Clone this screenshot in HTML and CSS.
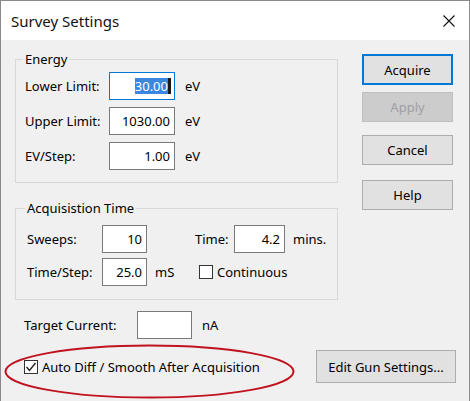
FILE: index.html
```html
<!DOCTYPE html>
<html>
<head>
<meta charset="utf-8">
<link rel="stylesheet" href="styles.css">
</head>
<body>
<div class="window">
  <div class="titlebar">
    <span class="title">Survey Settings</span>
    <svg class="close" width="12" height="12" viewBox="0 0 12 12"><path d="M0.5 0.5 L11.5 11.5 M11.5 0.5 L0.5 11.5" stroke="#111" stroke-width="1.1" fill="none"/></svg>
  </div>
  <div class="client">
    <div class="top">
      <div class="left">
        <fieldset class="group energy">
          <legend>Energy</legend>
          <div class="row">
            <span class="lbl">Lower Limit:</span>
            <div class="field wide focused"><span class="sel">30.00</span><span class="caret"></span></div>
            <span class="unit">eV</span>
          </div>
          <div class="row">
            <span class="lbl">Upper Limit:</span>
            <div class="field wide">1030.00</div>
            <span class="unit">eV</span>
          </div>
          <div class="row">
            <span class="lbl">EV/Step:</span>
            <div class="field wide">1.00</div>
            <span class="unit">eV</span>
          </div>
        </fieldset>
        <fieldset class="group acq">
          <legend>Acquisistion Time</legend>
          <div class="acq-grid">
            <span class="lbl">Sweeps:</span>
            <div class="field">10</div>
            <span></span>
            <span class="lbl">Time:</span>
            <div class="field">4.2</div>
            <span class="unit">mins.</span>
            <span class="lbl">Time/Step:</span>
            <div class="field">25.0</div>
            <span class="unit">mS</span>
            <label class="check cont"><span class="box"></span>Continuous</label>
          </div>
        </fieldset>
        <div class="target">
          <span class="lbl tlbl">Target Current:</span>
          <div class="field tfield"></div>
          <span class="unit">nA</span>
        </div>
      </div>
      <div class="buttons">
        <button class="btn default">Acquire</button>
        <button class="btn disabled apply">Apply</button>
        <button class="btn cancel">Cancel</button>
        <button class="btn help">Help</button>
      </div>
    </div>
    <div class="bottom">
      <label class="check auto"><span class="box"><svg width="12" height="12" viewBox="0 0 12 12"><path d="M1.5 6 L4.5 9.5 L10.5 2" stroke="#222" stroke-width="1.4" fill="none"/></svg></span>Auto Diff / Smooth After Acquisition</label>
      <button class="btn gun">Edit Gun Settings...</button>
    </div>
  </div>
  <svg class="annotation" width="470" height="401" viewBox="0 0 470 401"><ellipse cx="148.5" cy="370.5" rx="144" ry="26" fill="none" stroke="#c1121f" stroke-width="2"/></svg>
</div>
</body>
</html>
```

FILE: styles.css
```css
* { box-sizing: border-box; }
html, body { margin: 0; padding: 0; background: #f0f0f0; }
body { font-family: "Noto Sans", "Open Sans", sans-serif; font-size: 13px; color: #000; }

.window {
  position: relative;
  width: 470px;
  height: 401px;
  overflow: hidden;
  border: 1px solid #8a8a8a;
  border-bottom: none;
  background: #f0f0f0;
}

.titlebar {
  height: 39px;
  background: #fff;
  display: flex;
  align-items: center;
  justify-content: space-between;
  padding: 0 14px 0 10px;
}
.title { font-size: 15px; color: #111; }
.close { display: block; margin-top: 1px; }

.client { padding-left: 14px; }

.top { display: flex; align-items: flex-start; }
.left { width: 323px; }

.group {
  margin: 0;
  border: 1px solid #d8d8d8;
  padding: 0;
  min-width: 0;
}
.group legend {
  padding: 0 2px;
  margin-left: -2px;
  height: 16px;
  line-height: 16px;
}
.energy { margin-top: 11px; padding: 5px 0 12px 9px; display: flex; flex-direction: column; gap: 7px; }
.acq { margin-top: 17px; padding: 9px 0 13px 11px; }

.row { display: flex; align-items: center; height: 28px; }
.lbl { white-space: nowrap; }
.row .lbl { width: 84px; }

.field {
  height: 28px;
  background: #fff;
  border: 1px solid #7a7a7a;
  display: flex;
  align-items: center;
  justify-content: flex-end;
  padding-right: 4px;
  line-height: 16px;
}
.wide { width: 66px; }
.focused { border-color: #0078d7; padding-right: 3px; }
.sel { background: #3b86e0; color: #fff; }
.caret { display: inline-block; width: 3px; height: 16px; background: #1a1a1a; }
.unit { margin-left: 10px; }

.acq-grid {
  display: grid;
  grid-template-columns: 75px 45px 48px 39px 51px auto;
  grid-template-rows: 28px 28px;
  row-gap: 5px;
  align-items: center;
}
.acq-grid .unit { margin-left: 8px; }
.cont { grid-column: 4 / 7; margin-left: 4px; }

.check { display: flex; align-items: center; gap: 4px; }
.box {
  width: 14px;
  height: 14px;
  border: 1px solid #333;
  background: #fff;
  display: flex;
  align-items: center;
  justify-content: center;
}

.target { display: flex; align-items: center; margin-top: 11px; padding-left: 9px; height: 28px; }
.tlbl { width: 113px; }
.tfield { width: 55px; }

.buttons { margin-left: 24px; padding-top: 14px; display: flex; flex-direction: column; }
.btn {
  font: inherit;
  color: #000;
  width: 91px;
  height: 30px;
  background: #e1e1e1;
  border: 1px solid #adadad;
  padding: 0;
}
.default { height: 31px; border: 2px solid #0078d7; }
.disabled { background: #cccccc; border-color: #bfbfbf; color: #a0a0a0; }
.apply { margin-top: 7px; }
.cancel { margin-top: 13px; }
.help { margin-top: 15px; }

.bottom {
  display: flex;
  align-items: center;
  justify-content: space-between;
  margin-top: 11px;
  padding: 0 13px 0 9px;
}
.gun { width: 140px; height: 33px; }

.annotation { position: absolute; left: 0; top: 0; pointer-events: none; }
```
